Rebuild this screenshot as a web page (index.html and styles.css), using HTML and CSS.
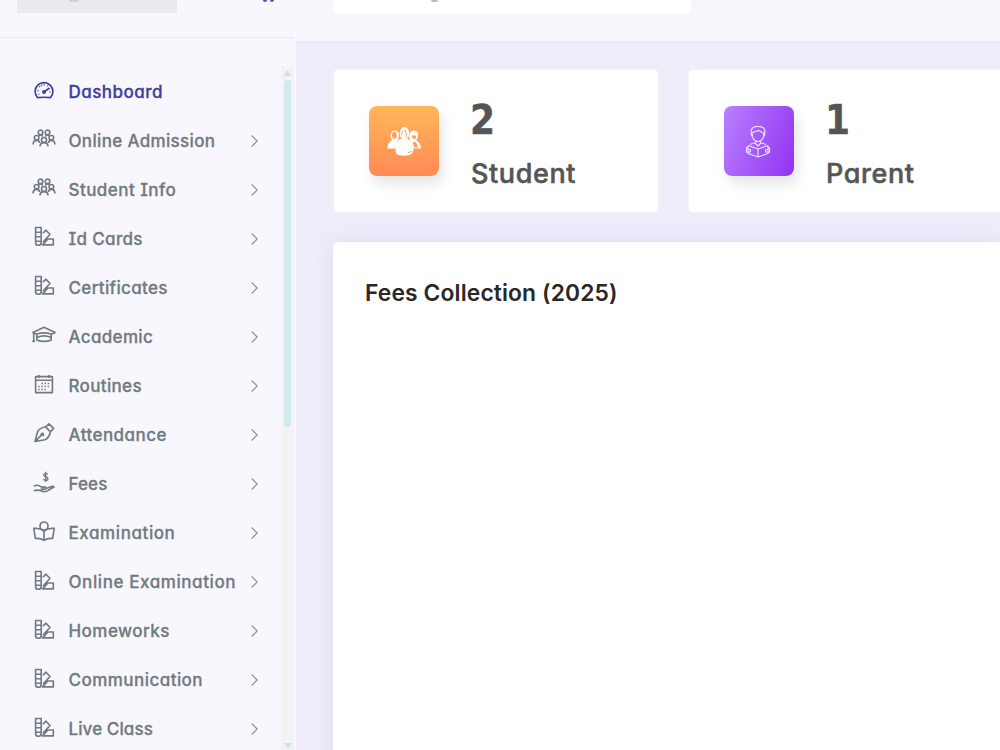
FILE: index.html
```html
<!DOCTYPE html>
<html lang="en">
<head>
<meta charset="utf-8">
<title>Dashboard</title>
<link rel="stylesheet" href="styles.css">
</head>
<body>
<svg class="defs" width="0" height="0" aria-hidden="true">
  <symbol id="gauge" viewBox="0 0 24 24"><path d="M5.5 19.6A8.9 8.9 0 1 1 18.5 19.6Q12 18.9 5.5 19.6Z"/><path d="M12 14L17.5 10"/><circle cx="12" cy="14" r="1.1" fill="currentColor"/><path d="M12 6v1.5M7.2 8.2l1 1M16 7.3l-.6 1M5.3 12.8h1.5M17.2 14h1.5M6.3 16.5l1-.4M9.3 6.8l.5 1.1" stroke-width="1.1"/></symbol>
  <symbol id="group" viewBox="0 0 24 24"><circle cx="8.500" cy="5.400" r="2.300"/><circle cx="15.500" cy="5.400" r="2.300"/><circle cx="4.600" cy="10.800" r="2.300"/><circle cx="19.400" cy="10.800" r="2.300"/><circle cx="12" cy="13" r="2.500"/><path d="M1.200 17.500v-1.400Q1.800 13.400 4.600 13.400T7.500 16M22.800 17.500v-1.400Q22.200 13.400 19.400 13.400T16.500 16M8.100 19.500v-1.200Q8.600 15.600 12 15.600t3.900 2.700v1.200M6.500 8.800Q8.500 6.800 10.800 9.600M13.200 9.600Q15.500 6.800 17.500 8.800"/></symbol>
  <symbol id="swatch" viewBox="0 0 24 24"><path d="M3.600 2.500h5.600v14.900a2.800 2.800 0 0 1-5.600 0zM4 7.200h5M4 11.700h5M4 16.200h5M11 8.200l3-3 4 4.300-7 7.500M15 14h6.300v5.900H10.500l5-5.500"/></symbol>
  <symbol id="cap" viewBox="0 0 24 24"><path d="M.9 9.500L12 4.300l11.100 5.200-3.500 1.700Q12 8.600 4.400 11.200zM4.800 11.200v5.700Q12 20 19.200 16.900v-5.700M4.800 14.400q7.200-3 14.400 0M1.700 10v7.700M.7 19l1-1.500 1 1.500"/></symbol>
  <symbol id="calendar" viewBox="0 0 24 24"><path d="M3.600 4.600h16.800v16H3.600zM3.600 8.200h16.800M7 3v3M17 3v3"/><path d="M9.500 11.500H18M6.200 14.500H18M6.200 17.500h8.500" stroke-width="1.6" stroke-dasharray="1.5 1.6"/></symbol>
  <symbol id="pen" viewBox="0 0 24 24"><path d="M3 20.500L5.500 11q1.600-3.800 8-5.200l5 5q-1.600 6.500-5.500 8zM3 20.500l6.400-6.300M14 5.600l3-2.800 4.600 4.600-3 3.200"/><circle cx="10.400" cy="13.400" r="1.100"/></symbol>
  <symbol id="hand" viewBox="0 0 24 24"><path d="M15.600 3.600Q15 2.300 13.700 2.400q-2 .1-2 1.700 0 1.200 2 1.600 2.200.4 2.200 2 0 1.600-2.200 1.700-1.600 0-2.200-1.500M13.700.8v10.200" stroke-width="1.400"/><path d="M1.800 15.400q3.200-2 5.600-.5l2.200 1.200h3.800q1.200 1.500-.5 2H8.700M14 17.500l5.600-2.100q2.300-.1 2.400.6l-7 4q-3 1.300-6-.3-3-1.300-7.200.1"/></symbol>
  <symbol id="reader" viewBox="0 0 24 24"><circle cx="12" cy="6" r="4"/><path d="M10 9.800Q6.500 8 1.800 8.400l1.500 10Q9 18 12 20.300 15 18 20.700 18.400l1.500-10Q17.500 8 14 9.800l-2 1.400zM12 11.200v9"/></symbol>
  <symbol id="next" viewBox="0 0 10 14"><path d="M1.700 1.500L7.200 7l-5.500 5.500"/></symbol>
</svg>
<div class="app">
  <aside class="sidebar">
    <div class="brand"><div class="logo"><i></i></div><div class="toggle"><i></i><i></i></div></div>
    <div class="side-body">
      <nav class="menu">
        <a class="item active"><svg class="icon"><use href="#gauge"/></svg><span class="wide">Dashboard</span></a>
        <a class="item"><svg class="icon"><use href="#group"/></svg><span>Online Admission</span><svg class="arrow"><use href="#next"/></svg></a>
        <a class="item"><svg class="icon"><use href="#group"/></svg><span class="slab wide">Student Info</span><svg class="arrow"><use href="#next"/></svg></a>
        <a class="item"><svg class="icon"><use href="#swatch"/></svg><span class="slab">Id Cards</span><svg class="arrow"><use href="#next"/></svg></a>
        <a class="item"><svg class="icon"><use href="#swatch"/></svg><span>Certificates</span><svg class="arrow"><use href="#next"/></svg></a>
        <a class="item"><svg class="icon"><use href="#cap"/></svg><span>Academic</span><svg class="arrow"><use href="#next"/></svg></a>
        <a class="item"><svg class="icon"><use href="#calendar"/></svg><span>Routines</span><svg class="arrow"><use href="#next"/></svg></a>
        <a class="item"><svg class="icon"><use href="#pen"/></svg><span class="wide">Attendance</span><svg class="arrow"><use href="#next"/></svg></a>
        <a class="item"><svg class="icon"><use href="#hand"/></svg><span class="tight">Fees</span><svg class="arrow"><use href="#next"/></svg></a>
        <a class="item"><svg class="icon"><use href="#reader"/></svg><span class="wider">Examination</span><svg class="arrow"><use href="#next"/></svg></a>
        <a class="item"><svg class="icon"><use href="#swatch"/></svg><span class="wider">Online Examination</span><svg class="arrow"><use href="#next"/></svg></a>
        <a class="item"><svg class="icon"><use href="#swatch"/></svg><span class="wide">Homeworks</span><svg class="arrow"><use href="#next"/></svg></a>
        <a class="item"><svg class="icon"><use href="#swatch"/></svg><span class="wide">Communication</span><svg class="arrow"><use href="#next"/></svg></a>
        <a class="item"><svg class="icon"><use href="#swatch"/></svg><span class="tight">Live Class</span><svg class="arrow"><use href="#next"/></svg></a>
      </nav>
      <div class="scroll"><i class="up"></i><i class="thumb"></i><i class="down"></i></div>
    </div>
  </aside>
  <main class="main">
    <header class="topbar"><div class="search"><i></i></div></header>
    <div class="content">
      <div class="cards">
        <section class="card">
          <div class="badge orange">
            <svg width="36" height="32" viewBox="0 0 36 32" fill="#fff"><path d="M1.500 23.500q0-6.500 4.500-8.200Q3.800 12.500 4.800 9 6 5.500 9 5.600q4.200.2 4 5.300l-1.500 4.700-2.500 8z"/><ellipse cx="8.400" cy="10.200" rx="2.400" ry="3.500" fill="#ffa159"/><path d="M24.300 15.400Q22.500 12 24 8q1.600-2.700 4.300-2.400 4.500.7 3.700 6l-1.800 4q4.600 2 4.700 7.900h-7z"/><path d="M25.900 10.500h4.500q-.4 3.600-2.200 3.600-1.900-.1-2.300-3.600zM26 17.500l3-.8q2.500 2 3.200 5.500h-4z" fill="#ff9e59"/><ellipse cx="18.500" cy="8.500" rx="4.800" ry="6.500"/><path d="M12.500 14.500l4.500-1 6 1q4 1.200 4.500 6v4.500q-1.200 4-4 5-5.500 1.300-11 0-3-1-3-5L9.500 20z"/><path d="M15.700 10q0-3.500 2.300-5M19.200 5l1.500 7M22 27.700l3.800-1.500" stroke="#ffab58" stroke-width="1" fill="none"/></svg>
          </div>
          <div class="stat"><strong>2</strong><span>Student</span></div>
        </section>
        <section class="card">
          <div class="badge purple">
            <svg width="30" height="36" viewBox="0 0 30 36" fill="none" stroke="#eadbff" stroke-width="1.200" stroke-linejoin="round"><path d="M8.200 10.500V7.200Q9.300 3.300 15 3.300t6.800 3.900v3.300M8.200 10.500l2-1.300Q15 8 15.300 7.200q3 2 6.500 3.300M9.200 10.500q0 7.500 5.800 8 5.800-.5 5.800-8M8.200 10.500q-.4 2.500 1.500 3M21.800 10.500q.4 2.500-1.500 3M12.500 17.500v2l-5.500 2M17.500 17.500v2l5.500 2M12 20l3 3 3-3M5 22.500l10 3.500 10-3.500v8L15 34 5 30.500zM15 26v8M5 24.500H3.500v4.500L5 30M25 24.500h1.500v4.500L25 30M5 26.500h2.500V29H5M25 26.500h-2.500V29H25"/></svg>
          </div>
          <div class="stat"><strong>1</strong><span>Parent</span></div>
        </section>
      </div>
      <section class="panel"><h3>Fees Collection (2025)</h3></section>
    </div>
  </main>
</div>
</body>
</html>
```
FILE: styles.css
```css
* { box-sizing: border-box; }
body { margin: 0; overflow: hidden; font-family: Inter, "Open Sans", sans-serif; font-feature-settings: "cv11"; }
.defs { display: block; height: 0; }
.app { display: flex; width: 1000px; height: 750px; overflow: hidden; background: #efedfa; }
.sidebar { display: flex; flex-direction: column; flex: 0 0 296px; background: #f8f7fe; border-right: 1px solid #fafafa; }
.brand { display: flex; flex: none; height: 38px; margin-right: 1px; padding-left: 17px; border-bottom: 1px solid #e8eaf2; }
.logo { width: 160px; height: 13px; background: #e9ecef; }
.logo i { display: block; width: 10px; height: 2px; margin-left: 52px; background: #d0d3d6; border-radius: 0 0 6px 6px; }
.toggle { display: flex; gap: 3px; margin-left: 86px; }
.toggle i { width: 4px; height: 2px; border-radius: 0 0 3px 3px; background: #4655b8; }
.side-body { display: flex; flex: 1; min-height: 0; justify-content: space-between; }
.menu { padding-top: 29px; }
.item { display: flex; align-items: center; width: 264px; height: 49.07px; padding-left: 32px; color: #727b80; font-size: 17px; font-weight: 500; letter-spacing: .34px; white-space: nowrap; }
.item span { margin-left: 12.5px; -webkit-text-stroke: .3px currentColor; }
.item .wide { letter-spacing: .46px; }
.item .wider { letter-spacing: .58px; }
.item .tight { letter-spacing: .1px; }
.slab { font-feature-settings: "cv11", "cv08", "ss02"; }
.active { color: #3a429f; }
.icon { flex: none; width: 24px; height: 24px; margin-bottom: 3px; fill: none; stroke: currentColor; stroke-width: 1.65; stroke-linejoin: round; }
.arrow { width: 10px; height: 14px; margin-left: auto; margin-right: 4px; fill: none; stroke: #90939c; stroke-width: 1.2; }
.scroll { display: flex; flex-direction: column; align-items: center; width: 13px; margin: 28px 1px 0 0; background: #f3f3f3; }
.up, .down { flex: none; width: 8px; height: 6px; background: #c5e6f0; clip-path: polygon(50% 0, 100% 100%, 0 100%); }
.up { margin-top: 4px; }
.down { margin-top: auto; margin-bottom: 1px; transform: rotate(180deg); }
.thumb { width: 7px; height: 347px; margin-top: 4px; border-radius: 4px; background: #d1e9ef; }
.main { flex: 1; min-width: 0; }
.topbar { height: 41px; padding-left: 37px; background: #f7f6fd; }
.search { width: 358px; height: 14px; background: #fff; border-radius: 0 0 5px 5px; }
.search i { display: block; width: 7px; height: 2px; margin-left: 98px; border-radius: 0 0 4px 4px; background: #b5c0c5; }
.content { padding: 28px 0 0 37px; box-shadow: inset 0 3px 4px -2px #e7e5f2; }
.cards { display: flex; gap: 29px; }
.card { display: flex; flex: 0 0 326px; height: 144px; padding: 36px 0 0 35px; background: #fff; border: 1px solid #f4f2fa; border-radius: 5px; }
.badge { display: flex; align-items: center; justify-content: center; width: 70px; height: 70px; border-radius: 8px; box-shadow: 4px 8px 13px rgba(0,0,0,.1); }
.orange { background: linear-gradient(#ffb657, #ff8b55); }
.purple { background: linear-gradient(110deg, #b880ff, #9233f1); }
.purple svg { margin-left: -2px; }
.stat { display: flex; flex-direction: column; margin: -6px 0 0 32px; color: #555; }
.stat strong { height: 40px; margin-left: -1px; font: bold 40px/40px "DejaVu Sans", sans-serif; transform: scaleX(.9); transform-origin: left; -webkit-text-stroke: .4px currentColor; }
.stat span { height: 34px; margin-top: 17px; font-size: 27px; font-weight: 500; letter-spacing: .6px; line-height: 34px; -webkit-text-stroke: .5px currentColor; }
.panel { height: 540px; margin-top: 29px; padding: 36px 0 0 32px; background: #fff; border-radius: 5px 0 0; box-shadow: 0 0 22px rgba(95,75,160,.12); }
h3 { margin: 0; color: #282828; font-size: 22.8px; font-weight: 600; letter-spacing: .14px; line-height: 29px; white-space: nowrap; }
```
